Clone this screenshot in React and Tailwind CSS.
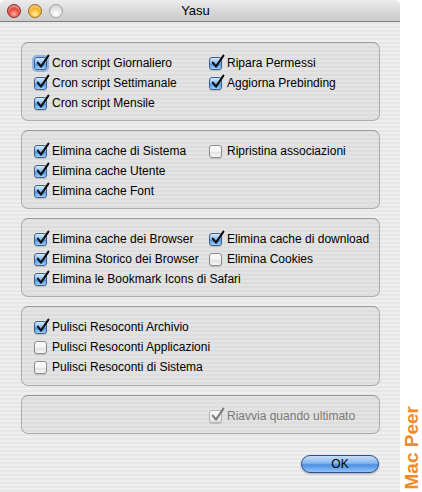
import React from "react";

function Check({ checked, disabled, focus }) {
  let box;
  if (disabled) {
    box = "border-[#b4b4b4] bg-[linear-gradient(#fafafa,#e4e4e4)]";
  } else if (checked) {
    box = "border-[#3d5f92] bg-[linear-gradient(#d6e8fb_0%,#8dbff2_45%,#4d93e3_55%,#9fd3ff_100%)]";
  } else {
    box = "border-[#8c8c8c] bg-[linear-gradient(#ffffff_0%,#f1f1f1_50%,#e2e2e2_55%,#f6f6f6_100%)]";
  }
  const ring = focus ? "shadow-[0_0_0_2px_rgba(90,150,230,0.6)]" : "shadow-[0_1px_1px_rgba(0,0,0,0.15)]";
  return (
    <span className={"relative inline-block w-[13px] h-[13px] shrink-0 rounded-[3px] border " + box + " " + ring}>
      {checked && (
        <svg className="absolute left-[1px] top-[-4px] w-[14px] h-[15px] overflow-visible" viewBox="0 0 14 15">
          <path
            d="M1.8 8.6 L5 12.6 L12.4 1.6"
            fill="none"
            stroke={disabled ? "#7d7d7d" : "#111"}
            strokeWidth="2.1"
            strokeLinecap="round"
            strokeLinejoin="round"
          />
        </svg>
      )}
    </span>
  );
}

function Item({ label, checked, disabled, focus }) {
  return (
    <div className="flex items-center h-[20px] whitespace-nowrap">
      <Check checked={checked} disabled={disabled} focus={focus} />
      <span className={"ml-[5px] " + (disabled ? "text-[#7a7a7a]" : "text-black")}>{label}</span>
    </div>
  );
}

function Group({ children, h }) {
  return (
    <div className={"rounded-[7px] border border-[#acacac] border-t-[#9a9a9a] bg-black/[0.045] pl-[12px] pt-[10px] " + h}>
      {children}
    </div>
  );
}

function Cols({ left, right }) {
  return (
    <div className="grid grid-cols-[175px_1fr]">
      <div className="flex flex-col">{left}</div>
      <div className="flex flex-col">{right}</div>
    </div>
  );
}

export default function App() {
  return (
    <div className="flex w-[422px] h-[492px] bg-white font-['Liberation_Sans',Arial,sans-serif] text-[12px]">
      <div className="w-[400px] h-[492px] flex flex-col rounded-t-[6px] overflow-hidden bg-[repeating-linear-gradient(to_bottom,#eeeeee_0px,#eeeeee_2px,#e7e7e7_2px,#e7e7e7_4px)]">
        <div className="relative h-[22px] shrink-0 flex items-center border-b border-[#7f7f7f] bg-[linear-gradient(#ececec,#d6d6d6_60%,#cbcbcb)]">
          <div className="flex items-center gap-[7px] pl-[7px] pt-[1px]">
            <span className="w-[14px] h-[14px] rounded-full border border-[#8a2b2b] bg-[radial-gradient(circle_at_50%_75%,#ffb0a0_0%,#e8493c_45%,#a9221b_100%)] shadow-[inset_0_2px_2px_rgba(255,255,255,0.55)]"></span>
            <span className="w-[14px] h-[14px] rounded-full border border-[#a06a0e] bg-[radial-gradient(circle_at_50%_75%,#fff4a8_0%,#fbb62a_45%,#c77c0a_100%)] shadow-[inset_0_2px_2px_rgba(255,255,255,0.55)]"></span>
            <span className="w-[14px] h-[14px] rounded-full border border-[#a3a3a3] bg-[radial-gradient(circle_at_50%_75%,#ffffff_0%,#e6e6e6_50%,#c6c6c6_100%)]"></span>
          </div>
          <div className="flex-1 text-center text-[13px] text-black pr-[72px] pt-[1px]">Yasu</div>
        </div>

        <div className="flex flex-col pl-[21px] pr-[20px] pt-[20px] gap-[9px]">
          <Group h="h-[79px]">
            <Cols
              left={[
                <Item key="a" label="Cron script Giornaliero" checked focus />,
                <Item key="b" label="Cron script Settimanale" checked />,
                <Item key="c" label="Cron script Mensile" checked />,
              ]}
              right={[
                <Item key="a" label="Ripara Permessi" checked />,
                <Item key="b" label="Aggiorna Prebinding" checked />,
              ]}
            />
          </Group>
          <Group h="h-[79px]">
            <Cols
              left={[
                <Item key="a" label="Elimina cache di Sistema" checked />,
                <Item key="b" label="Elimina cache Utente" checked />,
                <Item key="c" label="Elimina cache Font" checked />,
              ]}
              right={[<Item key="a" label="Ripristina associazioni" />]}
            />
          </Group>
          <Group h="h-[79px]">
            <Cols
              left={[
                <Item key="a" label="Elimina cache dei Browser" checked />,
                <Item key="b" label="Elimina Storico dei Browser" checked />,
              ]}
              right={[
                <Item key="a" label="Elimina cache di download" checked />,
                <Item key="b" label="Elimina Cookies" />,
              ]}
            />
            <Item label="Elimina le Bookmark Icons di Safari" checked />
          </Group>
          <Group h="h-[80px]">
            <Item label="Pulisci Resoconti Archivio" checked />
            <Item label="Pulisci Resoconti Applicazioni" />
            <Item label="Pulisci Resoconti di Sistema" />
          </Group>
          <Group h="h-[39px]">
            <div className="grid grid-cols-[175px_1fr]">
              <div></div>
              <Item label="Riavvia quando ultimato" checked disabled />
            </div>
          </Group>
        </div>

        <div className="flex justify-end pr-[21px] pt-[21px]">
          <button className="w-[78px] h-[18px] rounded-full border border-[#2a4f8f] bg-[linear-gradient(#c7defa_0%,#84b6ee_45%,#4f8fe0_55%,#8ec5fb_100%)] shadow-[0_1px_2px_rgba(0,0,0,0.3)] text-[12px] leading-none text-black flex items-center justify-center">
            OK
          </button>
        </div>
      </div>
      <div className="w-[22px] h-[492px] flex items-end justify-center pb-[3px]">
        <span className="[writing-mode:vertical-rl] rotate-180 text-[19px] font-bold leading-none text-[#f28a25] font-['Liberation_Sans',Arial,sans-serif]">
          Mac Peer
        </span>
      </div>
    </div>
  );
}
